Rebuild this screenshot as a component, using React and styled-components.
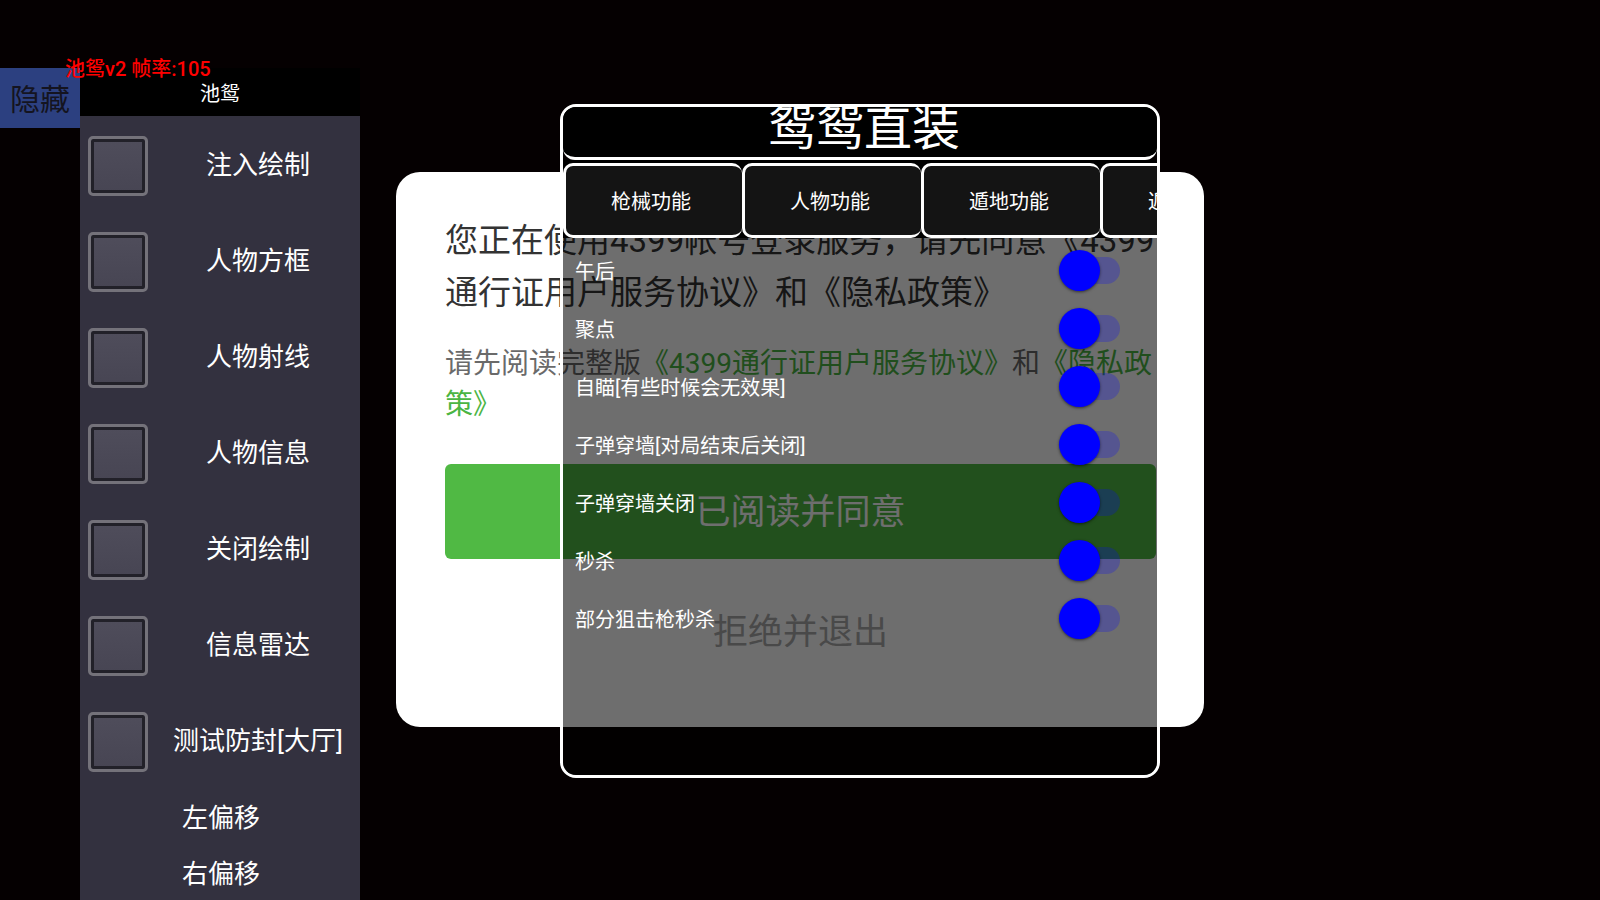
import styled, { createGlobalStyle } from "styled-components";

const GlobalStyle = createGlobalStyle`
  html, body {
    margin: 0;
    padding: 0;
    background: #050001;
  }
  body {
    font-family: Roboto, "Noto Sans CJK SC", sans-serif;
  }
`;

const drawItems = ["注入绘制", "人物方框", "人物射线", "人物信息", "关闭绘制", "信息雷达", "测试防封[大厅]"];
const offsetItems = ["左偏移", "右偏移"];
const tabs = ["枪械功能", "人物功能", "遁地功能", "遁地设置"];
const toggles = [
  "午后",
  "聚点",
  "自瞄[有些时候会无效果]",
  "子弹穿墙[对局结束后关闭]",
  "子弹穿墙关闭",
  "秒杀",
  "部分狙击枪秒杀",
];

const App = () => {
  return (
    <Screen>
      <GlobalStyle />

      <Dialog>
        <Lead>您正在使用4399帐号登录服务，请先同意《4399通行证用户服务协议》和《隐私政策》</Lead>
        <Notice>
          请先阅读完整版<Link>《4399通行证用户服务协议》</Link>和<Link>《隐私政策》</Link>
        </Notice>
        <AgreeButton>已阅读并同意</AgreeButton>
        <RejectButton>拒绝并退出</RejectButton>
      </Dialog>

      <MenuWindow>
        <TitleBar>鸳鸳直装</TitleBar>
        <TabRow>
          {tabs.map((t) => (
            <Tab key={t}>{t}</Tab>
          ))}
        </TabRow>
        <ToggleList>
          {toggles.map((t) => (
            <ToggleRow key={t}>
              <span>{t}</span>
              <Switch>
                <Track />
                <Thumb />
              </Switch>
            </ToggleRow>
          ))}
        </ToggleList>
      </MenuWindow>

      <SidePanel>
        <HideButton>隐藏</HideButton>
        <PanelColumn>
          <PanelHeader>池鸳</PanelHeader>
          <PanelBody>
            {drawItems.map((item) => (
              <CheckRow key={item}>
                <CheckBox />
                <CheckLabel>{item}</CheckLabel>
              </CheckRow>
            ))}
            {offsetItems.map((item) => (
              <OffsetRow key={item}>{item}</OffsetRow>
            ))}
          </PanelBody>
        </PanelColumn>
      </SidePanel>

      <FpsText>池鸳v2 帧率:105</FpsText>
    </Screen>
  );
};

const Screen = styled.div`
  position: relative;
  width: 1600px;
  height: 900px;
  overflow: hidden;
  background: #050001;
`;

/* login dialog underneath */
const Dialog = styled.div`
  position: absolute;
  left: 396px;
  top: 172px;
  z-index: 1;
  width: 808px;
  height: 555px;
  box-sizing: border-box;
  padding: 43px 48px 0 49px;
  background: #ffffff;
  border-radius: 24px;
`;

const Lead = styled.p`
  margin: 0;
  font-size: 33px;
  line-height: 52px;
  color: #333333;
`;

const Notice = styled.p`
  margin: 24px 0 0;
  font-size: 28px;
  line-height: 41px;
  color: #6a6a6a;
`;

const Link = styled.span`
  color: #4bb543;
`;

const AgreeButton = styled.div`
  margin-top: 39px;
  height: 95px;
  box-sizing: border-box;
  padding-bottom: 6px;
  border-radius: 6px;
  background: #50b944;
  color: #ffffff;
  font-size: 35px;
  display: flex;
  align-items: center;
  justify-content: center;
`;

const RejectButton = styled.div`
  margin-top: 25px;
  height: 95px;
  box-sizing: border-box;
  padding-bottom: 6px;
  color: #aaaaaa;
  font-size: 35px;
  display: flex;
  align-items: center;
  justify-content: center;
`;

/* cheat menu window */
const MenuWindow = styled.div`
  position: absolute;
  left: 560px;
  top: 104px;
  z-index: 2;
  width: 600px;
  height: 674px;
  box-sizing: border-box;
  border: 3px solid #ffffff;
  border-radius: 16px;
  overflow: hidden;
  display: flex;
  flex-direction: column;
`;

const TitleBar = styled.div`
  flex: none;
  height: 50px;
  padding-left: 8px;
  background: #000000;
  border-bottom: 3px solid #ffffff;
  border-radius: 0 0 12px 12px;
  color: #ffffff;
  font-size: 48px;
  line-height: 44px;
  text-align: center;
  overflow: hidden;
`;

const TabRow = styled.div`
  flex: none;
  display: flex;
  padding-top: 3px;
  background: #000000;
`;

const Tab = styled.div`
  flex: none;
  width: 179px;
  height: 75px;
  box-sizing: border-box;
  border: 3px solid #ffffff;
  border-right: none;
  border-radius: 10px;
  padding-right: 6px;
  background: #141414;
  color: #ffffff;
  font-size: 20px;
  display: flex;
  align-items: center;
  justify-content: center;
`;

const ToggleList = styled.div`
  flex: 1;
  padding-top: 3px;
  background: rgba(0, 0, 0, 0.57);
`;

const ToggleRow = styled.div`
  height: 58px;
  padding: 0 37px 0 12px;
  display: flex;
  align-items: center;
  justify-content: space-between;
  color: #ffffff;
  font-size: 20px;
`;

const Switch = styled.div`
  position: relative;
  width: 61px;
  height: 41px;
`;

const Track = styled.div`
  position: absolute;
  right: 0;
  top: 7px;
  width: 56px;
  height: 27px;
  border-radius: 14px;
  background: rgba(10, 10, 255, 0.24);
`;

const Thumb = styled.div`
  position: absolute;
  left: 0;
  top: 0;
  width: 41px;
  height: 41px;
  border-radius: 50%;
  background: #0000ff;
  box-shadow: 0 1px 3px rgba(0, 0, 0, 0.55);
`;

/* floating side panel */
const SidePanel = styled.div`
  position: absolute;
  left: 0;
  top: 68px;
  z-index: 3;
  display: flex;
  align-items: flex-start;
`;

const HideButton = styled.div`
  width: 80px;
  height: 60px;
  padding-bottom: 2px;
  box-sizing: border-box;
  background: #2c4080;
  color: #141420;
  font-size: 30px;
  display: flex;
  align-items: center;
  justify-content: center;
`;

const PanelColumn = styled.div`
  width: 280px;
  display: flex;
  flex-direction: column;
`;

const PanelHeader = styled.div`
  height: 48px;
  background: #000000;
  color: #ffffff;
  font-size: 20px;
  display: flex;
  align-items: center;
  justify-content: center;
`;

const PanelBody = styled.div`
  height: 784px;
  padding-top: 2px;
  background: #33313f;
`;

const CheckRow = styled.div`
  height: 96px;
  padding-left: 8px;
  display: flex;
  align-items: center;
`;

const CheckBox = styled.div`
  flex: none;
  width: 60px;
  height: 60px;
  box-sizing: border-box;
  border: 3px solid #74727a;
  border-radius: 5px;
  background: linear-gradient(#4f4d5b, #474553);
  box-shadow: inset 0 0 0 3px #222129;
`;

const CheckLabel = styled.div`
  flex: 1;
  padding: 0 0 7px 8px;
  text-align: center;
  color: #ffffff;
  font-size: 26px;
  white-space: nowrap;
`;

const OffsetRow = styled.div`
  height: 56px;
  box-sizing: border-box;
  padding: 0 0 6px 102px;
  display: flex;
  align-items: center;
  color: #ffffff;
  font-size: 26px;
`;

const FpsText = styled.div`
  position: absolute;
  left: 65px;
  top: 55px;
  z-index: 4;
  color: #ff0000;
  font-size: 20px;
  line-height: 28px;
  font-weight: 500;
`;

export default App;
